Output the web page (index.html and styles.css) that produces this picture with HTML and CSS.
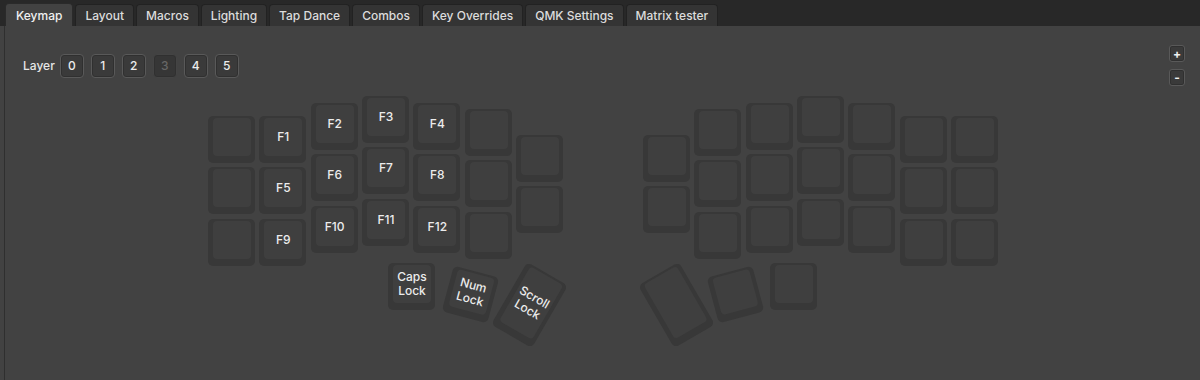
FILE: index.html
```html
<!DOCTYPE html>
<html lang="en">
<head>
    <meta charset="UTF-8">
    <title>Vial</title>
    <link rel="stylesheet" href="styles.css">
</head>
<body>
    <div class="tabbar">
        <div class="tab active">Keymap</div>
        <div class="tab">Layout</div>
        <div class="tab">Macros</div>
        <div class="tab">Lighting</div>
        <div class="tab">Tap Dance</div>
        <div class="tab">Combos</div>
        <div class="tab">Key Overrides</div>
        <div class="tab">QMK Settings</div>
        <div class="tab">Matrix tester</div>
    </div>

    <div class="panel">
        <div class="toolbar">
            <div class="layers">
                <span class="layer-label">Layer</span>
                <button class="layer-btn">0</button>
                <button class="layer-btn">1</button>
                <button class="layer-btn">2</button>
                <button class="layer-btn current">3</button>
                <button class="layer-btn">4</button>
                <button class="layer-btn">5</button>
            </div>
            <div class="zoom">
                <button class="zoom-btn">+</button>
                <button class="zoom-btn">-</button>
            </div>
        </div>

        <div class="board-wrap">
            <div class="board" id="board"></div>
        </div>
    </div>

    <script>
        // key grid: x/y in units of one key pitch, plus rotated thumb keys in px
        const U = 51.33;
        const labels = {
            '1,0': 'F1', '1,1': 'F5', '1,2': 'F9',
            '2,0': 'F2', '2,1': 'F6', '2,2': 'F10',
            '3,0': 'F3', '3,1': 'F7', '3,2': 'F11',
            '4,0': 'F4', '4,1': 'F8', '4,2': 'F12'
        };
        const leftCols = [[20, 3], [20, 3], [7, 3], [0, 3], [7, 3], [13, 3], [39, 2]];
        const rightCols = [[39, 2], [13, 3], [7, 3], [0, 3], [7, 3], [20, 3], [20, 3]];

        const board = document.getElementById('board');

        function addKey(left, top, w, h, rot, label) {
            const key = document.createElement('div');
            key.className = 'key';
            key.style.left = left + 'px';
            key.style.top = top + 'px';
            key.style.width = w + 'px';
            key.style.height = h + 'px';
            if (rot) key.style.transform = 'rotate(' + rot + 'deg)';
            const cap = document.createElement('div');
            cap.className = 'cap';
            if (label) cap.innerHTML = '<span>' + label + '</span>';
            key.appendChild(cap);
            board.appendChild(key);
        }

        leftCols.forEach(([y, rows], c) => {
            for (let r = 0; r < rows; r++) {
                addKey(c * U, y + r * U, 47, 47, 0, labels[c + ',' + r]);
            }
        });
        rightCols.forEach(([y, rows], c) => {
            for (let r = 0; r < rows; r++) {
                addKey(435 + c * U, y + r * U, 47, 47, 0);
            }
        });

        // thumb clusters
        addKey(180, 167, 47, 47, 0, 'Caps<br>Lock');
        addKey(238.5, 174.5, 47, 47, 15, 'Num<br>Lock');
        addKey(297.5, 173, 47, 72, 30, 'Scroll<br>Lock');
        addKey(562, 167, 47, 47, 0);
        addKey(503.5, 174.5, 47, 47, -15);
        addKey(444.5, 173, 47, 72, -30);
    </script>
</body>
</html>
```

FILE: styles.css
```css
body {
    margin: 0;
    background-color: #424242;
    font-family: 'Inter', 'Liberation Sans', sans-serif;
    color: #e6e6e6;
    height: 380px;
    overflow: hidden;
}

.tabbar {
    display: flex;
    align-items: flex-end;
    gap: 2px;
    height: 26px;
    padding-left: 5px;
    background-color: #282828;
    box-sizing: border-box;
}

.tab {
    height: 22px;
    padding: 0 9px;
    box-sizing: border-box;
    display: flex;
    align-items: center;
    font-size: 12px;
    font-weight: 500;
    color: #dcdcdc;
    background-color: #343434;
    border: 1px solid #222;
    border-bottom: none;
    border-radius: 4px 4px 0 0;
}

.tab.active {
    height: 23px;
    padding: 0 10px;
    background-color: #424242;
    color: #f0f0f0;
    border-color: #2a2a2a;
}

.panel {
    margin-left: 4px;
    border-left: 1px solid #2f2f2f;
    background-color: #424242;
    height: 354px;
}

.toolbar {
    display: flex;
    justify-content: space-between;
    align-items: center;
    padding: 19px 15px 0 18px;
}

.layers {
    display: flex;
    align-items: center;
    gap: 7px;
}

.layer-label {
    font-size: 12px;
    font-weight: 500;
    margin-right: -2px;
}

.layer-btn {
    width: 24px;
    height: 24px;
    padding: 0;
    background-color: #3a3a3a;
    border: 1px solid #595959;
    border-radius: 4px;
    color: #ececec;
    font-family: inherit;
    font-size: 12px;
    font-weight: 500;
    box-shadow: inset 0 0 0 1px #303030;
}

.layer-btn.current {
    background-color: #363636;
    border-color: #444;
    color: #666;
}

.zoom {
    display: flex;
    flex-direction: column;
    gap: 7px;
}

.zoom-btn {
    width: 16px;
    height: 17px;
    padding: 0;
    background-color: #3a3a3a;
    border: 1px solid #595959;
    border-radius: 3px;
    color: #f0f0f0;
    font-family: inherit;
    font-size: 12px;
    font-weight: 700;
    line-height: 1;
    box-shadow: inset 0 0 0 1px #303030;
}

.board-wrap {
    display: flex;
    justify-content: center;
    margin-top: 10px;
}

.board {
    position: relative;
    width: 789px;
    height: 256px;
}

.key {
    position: absolute;
    background-color: #383838;
    border-radius: 5px;
}

.cap {
    position: absolute;
    left: 5px;
    right: 4px;
    top: 2px;
    bottom: 7px;
    background-color: #3f3f3f;
    border-radius: 4px;
    display: flex;
    align-items: center;
    justify-content: center;
    text-align: center;
    font-size: 12px;
    font-weight: 500;
    line-height: 14px;
    color: #ececec;
}
```
